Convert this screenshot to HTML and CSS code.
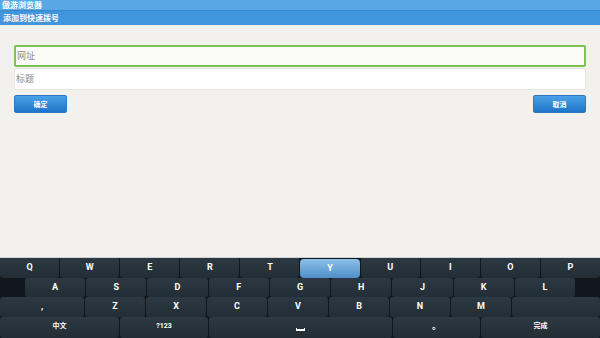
FILE: index.html
```html
<!DOCTYPE html>
<html>

<head>
    <meta charset="utf-8" />
    <title>傲游浏览器</title>
    <link rel="stylesheet" href="styles.css">
</head>

<body>
    <div class="screen">
        <div class="appbar">傲游浏览器</div>
        <div class="titlebar">添加到快速拨号</div>
        <div class="form">
            <div class="field focused">网址</div>
            <div class="field">标题</div>
            <div class="actions">
                <div class="btn">确定</div>
                <div class="btn">取消</div>
            </div>
        </div>
        <div class="keyboard">
            <div class="row r1">
                <div class="key">Q</div>
                <div class="key">W</div>
                <div class="key">E</div>
                <div class="key">R</div>
                <div class="key">T</div>
                <div class="key active">Y</div>
                <div class="key">U</div>
                <div class="key">I</div>
                <div class="key">O</div>
                <div class="key">P</div>
            </div>
            <div class="row r2">
                <div class="key">A</div>
                <div class="key">S</div>
                <div class="key">D</div>
                <div class="key">F</div>
                <div class="key">G</div>
                <div class="key">H</div>
                <div class="key">J</div>
                <div class="key">K</div>
                <div class="key">L</div>
            </div>
            <div class="row r3">
                <div class="key comma">,</div>
                <div class="key">Z</div>
                <div class="key">X</div>
                <div class="key">C</div>
                <div class="key">V</div>
                <div class="key">B</div>
                <div class="key">N</div>
                <div class="key">M</div>
                <div class="key wide"></div>
            </div>
            <div class="row r4">
                <div class="key lang">中文</div>
                <div class="key sym">?123</div>
                <div class="key space"><span class="space-icon"></span></div>
                <div class="key dot">。</div>
                <div class="key done">完成</div>
            </div>
        </div>
    </div>
</body>

</html>
```

FILE: styles.css
```css
* {
    box-sizing: border-box;
}

body,
html {
    margin: 0;
    width: 600px;
    height: 338px;
    overflow: hidden;
}

body {
    font-family: "Noto Sans CJK SC", "Noto Sans", sans-serif;
    background-color: #f2f1ed;
}

.screen {
    display: flex;
    flex-direction: column;
    height: 338px;
}

.appbar {
    height: 11px;
    background-color: #5aa7e5;
    color: #fff;
    font-size: 8px;
    font-weight: bold;
    line-height: 10px;
    padding-left: 2px;
    border-bottom: 1px solid #3a86c8;
}

.titlebar {
    height: 14px;
    background-color: #3f96dd;
    color: #fff;
    font-size: 8px;
    font-weight: bold;
    line-height: 13px;
    padding-left: 3px;
}

.form {
    flex: 1;
    padding: 20px 14px 0 14px;
}

.field {
    height: 22px;
    background-color: #fff;
    border: 1px solid #e4e4e0;
    border-radius: 2px;
    color: #8a8a8a;
    font-size: 9px;
    line-height: 20px;
    padding-left: 1px;
    margin-bottom: 1px;
}

.field.focused {
    border: 2px solid #7ec255;
    background-color: #fbfcf8;
    line-height: 18px;
}

.actions {
    display: flex;
    justify-content: space-between;
    margin-top: 5px;
}

.btn {
    width: 53px;
    height: 18px;
    border-radius: 2px;
    background: linear-gradient(#4aa3e8, #1e74c6);
    border: 1px solid #2a78c0;
    color: #fff;
    font-size: 7px;
    font-weight: bold;
    text-align: center;
    line-height: 16px;
}

.keyboard {
    height: 81px;
    background-color: #10181e;
    border-top: 1px solid #cfd3d6;
    display: flex;
    flex-direction: column;
    font-family: Roboto, "Noto Sans CJK SC", sans-serif;
}

.row {
    display: flex;
    gap: 1px;
}

.r1 {
    height: 20px;
}

.r2 {
    height: 19px;
    padding: 0 25px 0 25px;
}

.r3 {
    height: 20px;
}

.r4 {
    height: 21px;
}

.key {
    flex: 1;
    background: linear-gradient(#2d3942, #222d35);
    border-radius: 3px;
    color: #fff;
    font-size: 9px;
    font-weight: bold;
    text-align: center;
    line-height: 19px;
}

.key.active {
    background: linear-gradient(#8cc0e8, #4f8fc8);
    border-radius: 4px;
}

.r1 .key {
    border-radius: 0 0 3px 3px;
}

.r1 .key.active {
    border-radius: 4px;
    margin-top: 1px;
}

.r3 .key {
    flex: 0 0 60px;
}

.r3 .comma {
    flex: 0 0 84px;
}

.r3 .wide {
    flex: 1;
}

.lang {
    flex: 0 0 119px;
    font-size: 7px;
}

.sym {
    flex: 0 0 88px;
    font-size: 7px;
}

.space {
    flex: 0 0 183px;
    padding-top: 11px;
}

.space-icon {
    display: block;
    width: 9px;
    height: 3px;
    margin: 0 auto;
    border: 1px solid #fff;
    border-top: none;
    border-bottom-width: 2px;
}

.dot {
    flex: 0 0 87px;
}

.done {
    flex: 1;
    font-size: 7px;
}
```
